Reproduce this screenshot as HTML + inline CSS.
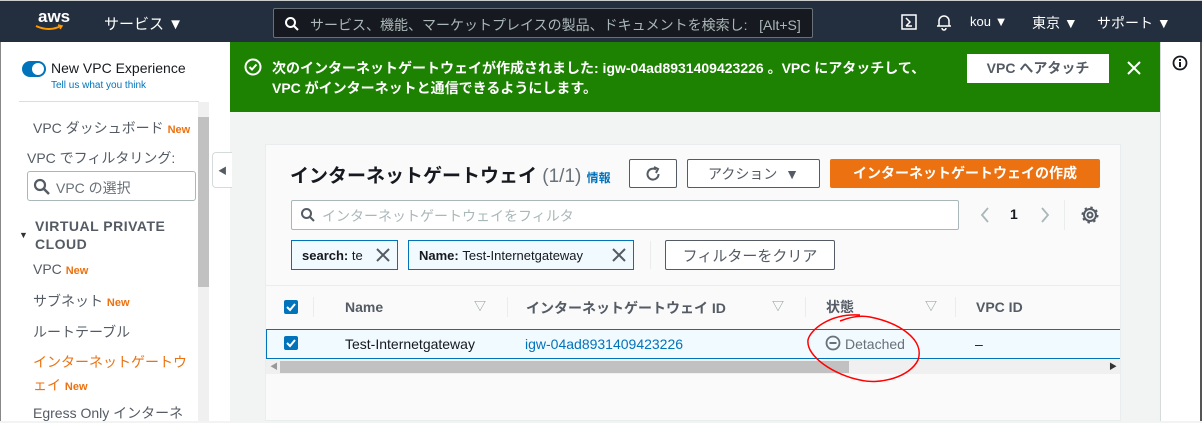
<!DOCTYPE html>
<html><head><meta charset="utf-8"><style>
*{box-sizing:border-box;margin:0;padding:0}
body{width:1202px;height:421px;overflow:hidden;position:relative;font-family:"Liberation Sans","Noto Sans CJK JP",sans-serif;background:#f2f3f3;color:#16191f}
.a{position:absolute}
.hdr{left:0;top:0;width:1202px;height:42px;background:#232f3e;color:#fff;font-size:14px;border-top:1px solid #ccc}
.side{left:0;top:42px;width:209px;height:379px;background:#fff;border-left:1px solid #888}
.btn{position:absolute;border:1px solid #545b64;border-radius:2px;background:#fff;font-size:14px;color:#545b64;display:flex;align-items:center;justify-content:center;font-weight:bold}
.tok{position:absolute;border:1px solid #0073bb;background:#f1faff;font-size:13px;height:30px;top:240px;display:flex;align-items:center;padding-left:10px;color:#16191f}
.new{color:#ec7211;font-size:11px;font-weight:bold}
.nav{position:absolute;left:32px;font-size:14px;color:#545b64}
</style></head><body>
<div class="a hdr">
 <div class="a" style="left:38px;top:6px;font-size:17px;font-weight:bold">aws</div>
 <svg class="a" style="left:34px;top:23px" width="30" height="8"><path d="M2 2 Q15 8 27 2" stroke="#f90" stroke-width="2" fill="none"/><path d="M24 1 L28 2 L26 5" stroke="#f90" stroke-width="1.5" fill="none"/></svg>
 <div class="a" style="left:104px;top:12px;font-size:15px">サービス ▼</div>
 <div class="a" style="left:273px;top:7px;width:540px;height:30px;border:1px solid #687078;border-radius:2px;background:#16191f;color:#aab7b8;font-size:14px;padding:6px 0 0 36px;white-space:nowrap;overflow:hidden">サービス、機能、マーケットプレイスの製品、ドキュメントを検索し:&nbsp;&nbsp;&nbsp;[Alt+S]</div>
 <svg class="a" style="left:284px;top:15px" width="16" height="16"><circle cx="6.5" cy="6.5" r="4.5" stroke="#fff" stroke-width="2" fill="none"/><path d="M10 10 L14 14" stroke="#fff" stroke-width="2"/></svg>
 <svg class="a" style="left:901px;top:13px" width="16" height="16"><rect x="1" y="1" width="14" height="14" stroke="#fff" stroke-width="1.5" fill="none"/><path d="M5 4 L9 8 L5 12 M5 12 H11" stroke="#fff" stroke-width="1.5" fill="none"/></svg>
 <svg class="a" style="left:936px;top:12px" width="16" height="18"><path d="M3 13 V8 A5 5 0 0 1 13 8 V13 Z M1 13 H15 M6 15 A2 2 0 0 0 10 15" stroke="#fff" stroke-width="1.5" fill="none"/></svg>
 <div class="a" style="left:970px;top:13px;font-size:13px">kou ▼</div>
 <div class="a" style="left:1032px;top:12px;font-size:14px">東京 ▼</div>
 <div class="a" style="left:1097px;top:12px;font-size:14px">サポート ▼</div>
</div>
<div class="a side">
 <div class="a" style="left:21px;top:19px;width:24px;height:16px;border-radius:8px;background:#0073bb"></div>
 <div class="a" style="left:31px;top:21px;width:12px;height:12px;border-radius:6px;background:#fff"></div>
 <div class="a" style="left:50px;top:18px;font-size:14px;color:#16191f">New VPC Experience</div>
 <div class="a" style="left:50px;top:38px;font-size:10px;color:#0073bb">Tell us what you think</div>
 <div class="a" style="left:18px;top:59px;width:180px;height:1px;background:#ddd"></div>
 <div class="a" style="left:197px;top:60px;width:12px;height:319px;background:#f0f0f0"></div>
 <div class="a" style="left:197px;top:75px;width:12px;height:170px;background:#c1c1c1"></div>
 <div class="nav" style="top:76px">VPC ダッシュボード <span class="new">New</span></div>
 <div class="a" style="left:26px;top:106px;font-size:14px;color:#545b64">VPC でフィルタリング:</div>
 <div class="a" style="left:26px;top:129px;width:169px;height:30px;border:1px solid #aab7b8;border-radius:3px;font-size:14px;color:#687078;padding:6px 0 0 28px">VPC の選択</div>
 <svg class="a" style="left:32px;top:136px" width="18" height="18"><circle cx="7" cy="7" r="5" stroke="#545b64" stroke-width="2.2" fill="none"/><path d="M11 11 L16 16" stroke="#545b64" stroke-width="2.5"/></svg>
 <div class="a" style="left:18px;top:188px;font-size:9px;color:#333">▼</div>
 <div class="a" style="left:34px;top:175px;font-size:14px;font-weight:bold;color:#545b64;line-height:18px;letter-spacing:.5px">VIRTUAL PRIVATE<br>CLOUD</div>
 <div class="nav" style="top:219px">VPC <span class="new">New</span></div>
 <div class="nav" style="top:249px">サブネット <span class="new">New</span></div>
 <div class="nav" style="top:280px">ルートテーブル</div>
 <div class="nav" style="top:309px;color:#ec7211;line-height:23px">インターネットゲートウ<br>ェイ <span class="new">New</span></div>
 <div class="nav" style="top:361px">Egress Only インターネ</div>
</div>
<div class="a" style="left:209px;top:42px;width:21px;height:379px;background:#fff"></div>
<div class="a" style="left:212px;top:152px;width:20px;height:36px;border:1px solid #d5dbdb;border-right:none;border-radius:4px 0 0 4px;background:#fff;font-size:9px;color:#545b64;padding:11px 0 0 5px">◀</div>
<div class="a" style="left:230px;top:42px;width:930px;height:70px;background:#1d8102;color:#fff;font-size:14px;font-weight:bold;line-height:20px;padding:16px 0 0 42px">次のインターネットゲートウェイが作成されました: igw-04ad8931409423226 。VPC にアタッチして、<br>VPC がインターネットと通信できるようにします。</div>
<svg class="a" style="left:244px;top:58px" width="18" height="18"><circle cx="9" cy="9" r="7.5" stroke="#fff" stroke-width="2" fill="none"/><path d="M5.5 9 L8 11.5 L12.5 6.5" stroke="#fff" stroke-width="2" fill="none"/></svg>
<div class="a" style="left:967px;top:54px;width:142px;height:29px;background:#fff;color:#545b64;font-size:14px;font-weight:bold;text-align:center;line-height:29px">VPC へアタッチ</div>
<svg class="a" style="left:1127px;top:61px" width="14" height="14"><path d="M1 1 L13 13 M13 1 L1 13" stroke="#fff" stroke-width="2"/></svg>
<div class="a" style="left:1160px;top:42px;width:42px;height:379px;background:#fff;border-left:1px solid #d5dbdb"></div>
<div class="a" style="left:1200px;top:42px;width:2px;height:379px;background:#555"></div>
<svg class="a" style="left:1172px;top:55px" width="16" height="16"><circle cx="8" cy="8" r="6.5" stroke="#16191f" stroke-width="1.8" fill="none"/><rect x="7" y="7" width="2" height="5" fill="#16191f"/><rect x="7" y="4" width="2" height="2" fill="#16191f"/></svg>
<div class="a" style="left:265px;top:144px;width:856px;height:277px;background:#fafafa;border:1px solid #eaeded"></div>
<div class="a" style="left:290px;top:161px;font-size:19px;font-weight:bold;color:#16191f;white-space:nowrap">インターネットゲートウェイ <span style="font-weight:normal;color:#687078">(1/1)</span> <span style="font-size:12px;color:#0073bb;font-weight:bold">情報</span></div>
<div class="btn" style="left:629px;top:159px;width:48px;height:29px"><svg width="18" height="18"><path d="M14.5 9 A5.5 5.5 0 1 1 12 4.5" stroke="#545b64" stroke-width="2" fill="none"/><path d="M10 2 L14 4 L12 8" stroke="#545b64" stroke-width="2" fill="none"/></svg></div>
<div class="btn" style="left:687px;top:159px;width:133px;height:29px;font-weight:normal">アクション&nbsp;&nbsp;▼</div>
<div class="a" style="left:830px;top:159px;width:270px;height:29px;background:#ec7211;border-radius:2px;color:#fff;font-size:14px;font-weight:bold;text-align:center;line-height:29px">インターネットゲートウェイの作成</div>
<div class="a" style="left:291px;top:200px;width:668px;height:30px;border:1px solid #aab7b8;border-radius:2px;background:#fff;font-size:14px;color:#aab7b8;padding:5px 0 0 30px">インターネットゲートウェイをフィルタ</div>
<svg class="a" style="left:300px;top:207px" width="16" height="16"><circle cx="6.5" cy="6.5" r="4.5" stroke="#545b64" stroke-width="2" fill="none"/><path d="M10 10 L14 14" stroke="#545b64" stroke-width="2"/></svg>
<svg class="a" style="left:978px;top:206px" width="80" height="18"><path d="M10 2 L4 9 L10 16" stroke="#aab7b8" stroke-width="1.8" fill="none"/><path d="M64 2 L70 9 L64 16" stroke="#aab7b8" stroke-width="1.8" fill="none"/></svg>
<div class="a" style="left:1010px;top:206px;font-size:14px;font-weight:bold;color:#16191f">1</div>
<div class="a" style="left:1064px;top:200px;width:1px;height:30px;background:#eaeded"></div>
<svg class="a" style="left:1081px;top:206px" width="18" height="18"><circle cx="9" cy="9" r="2.5" stroke="#545b64" stroke-width="2" fill="none"/><circle cx="9" cy="9" r="6" stroke="#545b64" stroke-width="2" fill="none"/><circle cx="9" cy="9" r="7.5" stroke="#545b64" stroke-width="2" stroke-dasharray="2.4 3.5" fill="none"/></svg>
<div class="tok" style="left:291px;width:107px"><b>search:</b>&nbsp;te</div>
<svg class="a" style="left:375px;top:247px" width="16" height="16"><path d="M2 2 L14 14 M14 2 L2 14" stroke="#545b64" stroke-width="2"/></svg>
<div class="tok" style="left:408px;width:226px"><b>Name:</b>&nbsp;Test-Internetgateway</div>
<svg class="a" style="left:611px;top:247px" width="16" height="16"><path d="M2 2 L14 14 M14 2 L2 14" stroke="#545b64" stroke-width="2"/></svg>
<div class="a" style="left:650px;top:241px;width:1px;height:28px;background:#eaeded"></div>
<div class="btn" style="left:665px;top:240px;width:170px;height:30px;font-weight:normal;font-size:15px;color:#545b64">フィルターをクリア</div>
<div class="a" style="left:266px;top:285px;width:854px;height:1px;background:#eaeded"></div>
<div class="a" style="left:284px;top:300px;width:14px;height:14px;background:#0073bb;border-radius:2px"></div>
<svg class="a" style="left:284px;top:300px" width="14" height="14"><path d="M3 7 L6 10 L11 4" stroke="#fff" stroke-width="2" fill="none"/></svg>
<div class="a" style="left:313px;top:297px;width:1px;height:20px;background:#eaeded"></div>
<div class="a" style="left:345px;top:299px;font-size:14px;font-weight:bold;color:#545b64">Name</div>
<div class="a" style="left:474px;top:297px;font-size:12px;color:#879596">▽</div>
<div class="a" style="left:507px;top:297px;width:1px;height:20px;background:#eaeded"></div>
<div class="a" style="left:526px;top:298px;font-size:14px;font-weight:bold;color:#545b64">インターネットゲートウェイ ID</div>
<div class="a" style="left:772px;top:297px;font-size:12px;color:#879596">▽</div>
<div class="a" style="left:805px;top:297px;width:1px;height:20px;background:#eaeded"></div>
<div class="a" style="left:826px;top:297px;font-size:14px;font-weight:bold;color:#545b64">状態</div>
<div class="a" style="left:925px;top:297px;font-size:12px;color:#879596">▽</div>
<div class="a" style="left:955px;top:297px;width:1px;height:20px;background:#eaeded"></div>
<div class="a" style="left:976px;top:299px;font-size:14px;font-weight:bold;color:#545b64">VPC ID</div>
<div class="a" style="left:266px;top:329px;width:854px;height:30px;background:#f1faff;border-top:1px solid #0073bb;border-bottom:1px solid #0073bb"></div>
<div class="a" style="left:266px;top:329px;width:1px;height:30px;background:#0073bb"></div>
<div class="a" style="left:284px;top:336px;width:14px;height:14px;background:#0073bb;border-radius:2px"></div>
<svg class="a" style="left:284px;top:336px" width="14" height="14"><path d="M3 7 L6 10 L11 4" stroke="#fff" stroke-width="2" fill="none"/></svg>
<div class="a" style="left:345px;top:336px;font-size:14px;color:#16191f">Test-Internetgateway</div>
<div class="a" style="left:525px;top:336px;font-size:14px;color:#0073bb">igw-04ad8931409423226</div>
<svg class="a" style="left:825px;top:335px" width="16" height="16"><circle cx="8" cy="8" r="6.5" stroke="#687078" stroke-width="1.8" fill="none"/><path d="M4.5 8 H11.5" stroke="#687078" stroke-width="2"/></svg>
<div class="a" style="left:845px;top:336px;font-size:14px;color:#687078">Detached</div>
<div class="a" style="left:975px;top:336px;font-size:14px;color:#16191f">–</div>
<div class="a" style="left:266px;top:360px;width:854px;height:14px;background:#f0f0f0"></div>
<div class="a" style="left:280px;top:361px;width:569px;height:12px;background:#c1c1c1"></div>
<div class="a" style="left:270px;top:361px;font-size:8px;color:#999">◀</div>
<div class="a" style="left:1109px;top:361px;font-size:8px;color:#333">▶</div>
<svg class="a" style="left:800px;top:305px" width="130" height="85"><path d="M60 10 C30 8 10 25 8 35 C6 52 35 70 60 75 C80 80 110 72 118 55 C125 35 100 18 70 12 C60 10 50 12 40 16" stroke="#f00" stroke-width="1.5" fill="none"/></svg>
</body></html>
